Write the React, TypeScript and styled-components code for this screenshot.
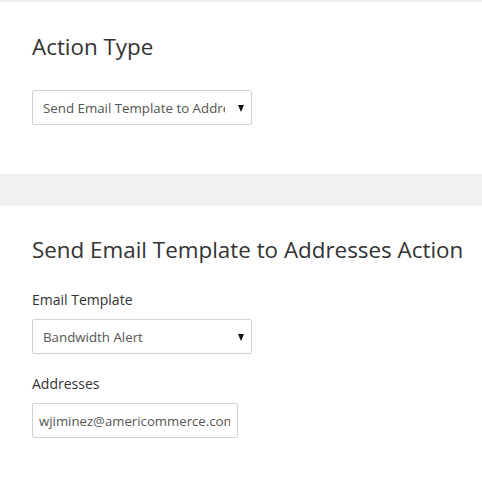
import React from "react";
import styled, { createGlobalStyle } from "styled-components";

const Global = createGlobalStyle`
  html, body { margin: 0; padding: 0; background: #f0f1f3; }
  body { font-family: "Open Sans", "Noto Sans", sans-serif; color: #333; }
`;

const Page = styled.div`
  display: flex;
  flex-direction: column;
  gap: 32px;
  padding-top: 2px;
  min-height: 485px;
  box-sizing: border-box;
`;

const Card = styled.section<{ $top: number; $bottom: number; $grow?: boolean }>`
  background: #fff;
  padding: ${(p) => p.$top}px 32px ${(p) => p.$bottom}px;
  display: flex;
  flex-direction: column;
  align-items: flex-start;
  flex: ${(p) => (p.$grow ? 1 : "none")};
`;

const Heading = styled.h2<{ $gap: number }>`
  margin: 0 0 ${(p) => p.$gap}px;
  font-size: 22.4px;
  line-height: 26px;
  font-weight: 400;
  color: #333;
  white-space: nowrap;
`;

const Label = styled.label`
  display: block;
  font-size: 14px;
  line-height: 18px;
  color: #333;
  margin-bottom: 10px;
`;

const Field = styled.div<{ $gap: number }>`
  margin-bottom: ${(p) => p.$gap}px;
`;

const SelectBox = styled.div<{ $w: number }>`
  position: relative;
  display: flex;
  align-items: center;
  width: ${(p) => p.$w}px;
  height: 35px;
  box-sizing: border-box;
  border: 1px solid #d2d2d2;
  border-radius: 2px;
  background: #fff;
  padding: 0 26px 0 10px;
  font-size: 13.3px;
  color: #555;
  cursor: default;
`;

const SelectValue = styled.span`
  flex: 1;
  min-width: 0;
  overflow: hidden;
  white-space: nowrap;
`;

const Arrow = styled.span`
  position: absolute;
  right: 7px;
  top: 14px;
  width: 0;
  height: 0;
  border-left: 3.5px solid transparent;
  border-right: 3.5px solid transparent;
  border-top: 7px solid #111;
  pointer-events: none;
`;

const Input = styled.input`
  width: 206px;
  height: 35px;
  box-sizing: border-box;
  border: 1px solid #d2d2d2;
  border-radius: 2px;
  padding: 0 7px 0 6px;
  font-family: "Open Sans", "Noto Sans", sans-serif;
  font-size: 13.2px;
  color: #555;
  outline: none;
`;

function FakeSelect({ value, width }: { value: string; width: number }) {
  return (
    <SelectBox $w={width} role="combobox">
      <SelectValue>{value}</SelectValue>
      <Arrow />
    </SelectBox>
  );
}

export default function App() {
  return (
    <>
      <Global />
      <Page>
        <Card $top={32} $bottom={49}>
          <Heading $gap={30}>Action Type</Heading>
          <FakeSelect width={220} value="Send Email Template to Addresses Action" />
        </Card>
        <Card $top={31} $bottom={0} $grow>
          <Heading $gap={28}>Send Email Template to Addresses Action</Heading>
          <Field $gap={21}>
            <Label>Email Template</Label>
            <FakeSelect width={220} value="Bandwidth Alert" />
          </Field>
          <Field $gap={0}>
            <Label>Addresses</Label>
            <Input defaultValue="wjiminez@americommerce.com" />
          </Field>
        </Card>
      </Page>
    </>
  );
}
